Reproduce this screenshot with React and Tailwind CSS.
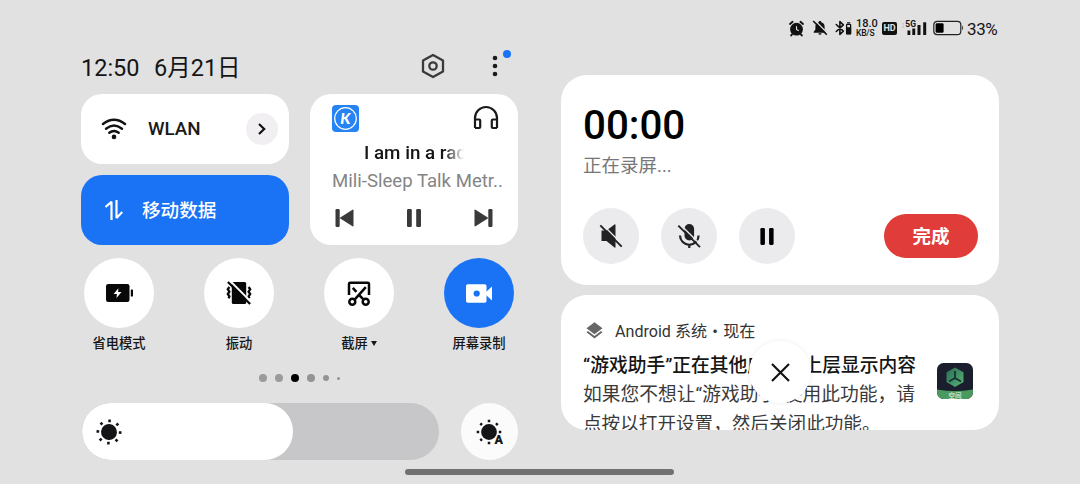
import React from 'react';

// ── Status bar icons ───────────────────────────────────
const IconAlarm = () => (
  <svg className="h-[17px] w-[17px]" viewBox="0 0 17 17" fill="none" stroke="#111" strokeLinecap="round">
    <circle cx="8.5" cy="9.2" r="6.4" fill="#111" stroke="none" />
    <path d="M2 4l2.6-2.2M15 4l-2.6-2.2M4 14.4l-.8 1M13 14.4l.8 1" strokeWidth="1.9" />
    <path d="M8.5 6.6v2.900l1.900 1" stroke="#e1e1e2" strokeWidth="1.1" />
  </svg>
);

const IconBellOff = () => (
  <svg className="h-4 w-4" viewBox="0 0 16 16">
    <path d="M8 1c.9 0 1.3.5 1.3 1.2 2.200.6 3.300 2.300 3.300 4.300v3l1.700 2.300v.9H1.700v-.9l1.700-2.300v-3c0-2 1.100-3.700 3.300-4.300C6.700 1.500 7.100 1 8 1zM6.400 13.200h3.200a1.600 1.600 0 01-3.200 0z" fill="#111" />
    <path d="M2.800.400l13.200 13.400" stroke="#e1e1e2" strokeWidth="1.300" />
    <path d="M1.200 1l13.600 13.800" stroke="#111" strokeWidth="1.600" />
  </svg>
);

const IconBluetooth = () => (
  <svg className="h-4 w-[17px]" viewBox="0 0 17 16" fill="none" stroke="#111">
    <path d="M1.300 4.500l7 6.600-3.400 3.400V1.500l3.400 3.400-7 6.600" strokeWidth="1.600" strokeLinejoin="round" strokeLinecap="round" />
    <path d="M12.700 3.500V2.800h1.800v.700" strokeWidth="1.300" />
    <rect x="11.600" y="4.300" width="4" height="9.600" rx=".6" strokeWidth="1.300" />
    <rect x="11.600" y="7.800" width="4" height="6" fill="#111" />
  </svg>
);

const IconSignal = () => (
  <svg className="h-4 w-[25px]" viewBox="0 0 25 16" fill="#111">
    <rect x="-1" y="3" width="3" height="1.500" fill="#c8c8c8" />
    <rect x="-1" y="6" width="3" height="1.500" fill="#c8c8c8" />
    <text x="3.300" y="7.300" fontSize="8.500" fontWeight="700" fontFamily="Roboto">5G</text>
    <rect x="5.500" y="10.500" width="2.800" height="4.500" />
    <rect x="10.300" y="8.500" width="2.900" height="6.500" />
    <rect x="15.500" y="5" width="3" height="10" />
    <rect x="21.200" y="2.300" width="3" height="12.700" />
  </svg>
);

const IconBattery = () => (
  <svg className="h-4 w-[31px]" viewBox="0 0 31 16" fill="none">
    <rect x=".8" y="1.300" width="27" height="13.400" rx="3.400" stroke="#222" strokeWidth="1.200" />
    <rect x="2.600" y="3.200" width="8" height="9.600" rx="1.300" fill="#000" />
    <path d="M29.200 5.500c1.200.8 1.200 4 0 4.800z" fill="#222" />
  </svg>
);

// ── Header icons ───────────────────────────────────────
const IconSettings = () => (
  <svg className="h-[26px] w-[26px]" viewBox="0 0 26 26" fill="none" stroke="#3a3a3c" strokeWidth="2.300" strokeLinejoin="round">
    <path d="M13 2l10 5.600v10.800L13 24 3 18.400V7.600z" />
    <circle cx="13" cy="13" r="3.700" />
  </svg>
);

const IconMore = () => (
  <svg className="h-[22px] w-[6px]" viewBox="0 0 6 22" fill="#1c1c1c">
    <circle cx="3" cy="3" r="2.300" />
    <circle cx="3" cy="11" r="2.300" />
    <circle cx="3" cy="19" r="2.300" />
  </svg>
);

// ── Card icons ─────────────────────────────────────────
const IconWifi = () => (
  <svg className="h-[22px] w-[26px]" viewBox="0 0 26 22" fill="none" stroke="#111" strokeWidth="2.400" strokeLinecap="round">
    <path d="M2 6Q13-2.400 24 6" />
    <path d="M5 10.700q8-6.400 16 0" />
    <path d="M8.300 14.700q4.700-3.600 9.400 0" />
    <circle cx="13" cy="18.900" r="2.300" fill="#111" stroke="none" />
  </svg>
);

const IconChevron = () => (
  <svg className="h-3 w-2" viewBox="0 0 8 12" fill="none" stroke="#111" strokeWidth="2.200">
    <path d="M1 1l5.200 5L1 11" />
  </svg>
);

const IconMobileData = () => (
  <svg className="h-5 w-[18px]" viewBox="0 0 18 20" fill="none" stroke="#fff" strokeWidth="2.200" strokeLinejoin="bevel">
    <path d="M.5 7L6.500 1.800V20" />
    <path d="M11.500 0v18L17.300 12" />
  </svg>
);

const IconKugou = () => (
  <svg className="h-[27px] w-[27px]" viewBox="0 0 27 27">
    <rect width="27" height="27" rx="4" fill="#2583f4" />
    <circle cx="13.500" cy="13.500" r="10.800" fill="none" stroke="#fff" strokeWidth="1.200" />
    <text x="13.300" y="19" fontSize="15.500" fontWeight="900" fontStyle="italic" fontFamily="Lato, Roboto, sans-serif" fill="#fff" textAnchor="middle">K</text>
  </svg>
);

const IconHeadphones = () => (
  <svg className="h-[25px] w-[26px]" viewBox="0 0 26 25" fill="none" stroke="#1a1a1a" strokeWidth="2.200">
    <path d="M2 23V13a11 11 0 0122 0v10" />
    <path d="M2 14.500h4.200a1 1 0 011 1V22a1 1 0 01-1 1H2M24 14.500h-4.200a1 1 0 00-1 1V22a1 1 0 001 1H24" />
  </svg>
);

const IconSkip = ({ className }) => (
  <svg className={`h-[18px] w-[19px] ${className}`} viewBox="0 0 19 18" fill="#3a3a3a">
    <rect x=".5" y="0" width="4.200" height="18" rx="1.200" />
    <path d="M4.500 9L17.500.7q1-.5 1 .6v15.400q0 1.100-1 .6z" />
  </svg>
);

const IconPause = ({ className }) => (
  <svg className={className} viewBox="0 0 14 18" fill="currentColor">
    <rect x="0" y="0" width="4.800" height="18" rx="1.200" />
    <rect x="9.200" y="0" width="4.800" height="18" rx="1.200" />
  </svg>
);

// ── Tile icons ─────────────────────────────────────────
const IconPowerSave = () => (
  <svg className="h-[18px] w-[27px]" viewBox="0 0 27 18">
    <rect width="23.500" height="18" rx="2.200" fill="#080808" />
    <rect x="24.800" y="5.500" width="2.200" height="7" rx=".6" fill="#080808" />
    <path d="M12.400 4.200L7.600 10h3.300l-.4 4 5-6h-3.400z" fill="#fff" />
  </svg>
);

const IconVibrate = () => (
  <svg className="h-6 w-[26px]" viewBox="0 0 26 24" fill="none">
    <rect x="5.800" y="1" width="14.400" height="22" rx="1.500" fill="#080808" />
    <path d="M3.400 6L1.800 8.300l1.600 2.400L1.800 13l1.600 2.400-.8 2M22.600 6l1.600 2.300-1.600 2.400 1.600 2.300-1.600 2.400.8 2" stroke="#080808" strokeWidth="2.300" />
    <path d="M3.700-.5l22 22" stroke="#fff" strokeWidth="2" />
    <path d="M1.900 1l22.200 22" stroke="#080808" strokeWidth="2.300" />
  </svg>
);

const IconScreenshot = () => (
  <svg className="h-[25px] w-6" viewBox="0 0 24 25" fill="none" stroke="#080808" strokeWidth="2.500">
    <path d="M2 14V3a1.200 1.200 0 011.200-1.200h17.600A1.200 1.200 0 0122 3v11" />
    <path d="M5.800 6.800l3.600 4M18.800 6.200L7.600 18.600M11.600 13.500l5 5.100" />
    <circle cx="5.300" cy="20.700" r="3" />
    <circle cx="18.700" cy="20.700" r="3" />
  </svg>
);

const IconRecord = () => (
  <svg className="h-[19px] w-[27px]" viewBox="0 0 27 19">
    <rect y=".3" width="20.500" height="18.400" rx="1.800" fill="#fff" />
    <path d="M20 8L26 2.500v14L20 11z" fill="#fff" />
    <circle cx="10.700" cy="9.500" r="3.100" fill="#1a73f5" />
  </svg>
);

const IconSun = ({ className }) => (
  <svg className={className} viewBox="-13 -13 26 26" fill="#151517" stroke="#151517" strokeWidth="2.600">
    <circle r="8" stroke="none" />
    <path d="M0-12.500v2.700M0 9.800v2.700M-12.500 0h2.700M9.800 0h2.700M-8.900-8.900l1.900 1.900M7 7l1.900 1.900M8.900-8.900L7-7M-7 7l-1.900 1.900" />
  </svg>
);

const IconSunAuto = () => (
  <svg className="h-[26px] w-[27px]" viewBox="-13 -13 27 26" fill="#151517">
    <circle r="7.900" />
    <path d="M0-12.300v2.500M0 9.800v2.500M-12.300 0h2.500M9.800 0h2.500M-8.700-8.700l1.700 1.700M8.700-8.700L7-7M-7 7l-1.700 1.700" stroke="#151517" strokeWidth="2.500" />
    <text x="9.700" y="12.400" fontSize="12.500" fontWeight="900" fontFamily="Roboto" textAnchor="middle" stroke="#fbfbfc" strokeWidth="1.500" paintOrder="stroke">A</text>
  </svg>
);

// ── Recorder icons ─────────────────────────────────────
const IconMute = () => (
  <svg className="h-6 w-6" viewBox="0 0 24 24">
    <path d="M2.500 6.500h5L15.500.500q1-.5 1 .5v22q0 1-1 .5l-8-6.500h-5z" fill="#222" />
    <path d="M3 0l21 21" stroke="#ebebed" strokeWidth="1.300" />
    <path d="M1.300 1.300l21.400 21.400" stroke="#222" strokeWidth="1.900" />
  </svg>
);

const IconMicOff = () => (
  <svg className="h-[26px] w-6" viewBox="0 0 24 26" fill="none">
    <rect x="7.500" y="1" width="9.600" height="16.500" rx="4.800" fill="#222" />
    <path d="M3 12.500a9.300 9.300 0 0018.600 0M12.300 21.500V25" stroke="#222" strokeWidth="2.200" />
    <path d="M3 1.200l21 20.800" stroke="#ebebed" strokeWidth="1.300" />
    <path d="M1.300 2.600l21.700 21.600" stroke="#222" strokeWidth="1.900" />
  </svg>
);

const IconLayers = () => (
  <svg className="h-[17px] w-[17px]" viewBox="0 0 17 17" fill="#666">
    <path d="M8.500.3l8 6-8 6-8-6z" />
    <path d="M.5 10.200l8 6.200 8-6.200-1.500-1.100-6.500 5-6.500-5z" />
  </svg>
);

const IconGame = () => (
  <svg className="h-9 w-9" viewBox="0 0 36 36">
    <defs>
      <clipPath id="gameClip"><rect width="36" height="36" rx="6.500" /></clipPath>
      <linearGradient id="gameHex" x1="0" y1="0" x2="1" y2="1">
        <stop offset="0" stopColor="#2c6b5a" />
        <stop offset="1" stopColor="#58b573" />
      </linearGradient>
    </defs>
    <g clipPath="url(#gameClip)">
      <rect width="36" height="36" fill="#1b1e2c" />
      <path d="M0 26.500q18 3 36 0V36H0z" fill="#4a9a5f" />
      <path d="M18 4.500l8.500 4.800v9.800L18 24l-8.500-4.900V9.300z" fill="url(#gameHex)" />
      <path d="M18 8v7l-6 3.500M18 15l6 3.500" stroke="#16302e" strokeWidth="1.800" fill="none" />
      <text x="18" y="34.500" fontSize="6.500" fontWeight="700" fontFamily="Noto Sans CJK SC" fill="#c4dfc9" textAnchor="middle">空间</text>
    </g>
  </svg>
);

const IconClose = () => (
  <svg className="h-[19px] w-[19px]" viewBox="0 0 19 19" fill="none" stroke="#111" strokeWidth="2.100">
    <path d="M1 1l17 17M18 1L1 18" />
  </svg>
);

// ── Data ───────────────────────────────────────────────
const TILES = [
  { id: 'power', label: '省电模式', icon: <IconPowerSave /> },
  { id: 'vibrate', label: '振动', icon: <IconVibrate /> },
  { id: 'screenshot', label: '截屏', icon: <IconScreenshot />, menu: true },
  { id: 'record', label: '屏幕录制', icon: <IconRecord />, active: true },
];

const PAGE_DOTS = ['size-2 bg-[#9b9b9d]', 'size-2 bg-[#9b9b9d]', 'size-2 bg-black', 'size-2 bg-[#949496]', 'size-1.5 bg-[#949496]', 'size-[3px] bg-[#949496]'];

// ── Quick settings ─────────────────────────────────────
const Header = () => (
  <div className="flex h-[38px] items-center text-[23.5px] leading-[38px] text-[#151515]">
    <span className="w-[73px] pt-0.5">12:50</span>
    <span className="pt-0.5">6月21日</span>
    <div className="ml-auto flex items-center gap-[46px] pr-5">
      <span className="-mt-0.5"><IconSettings /></span>
      <div className="relative -mt-0.5">
        <IconMore />
        <span className="absolute -top-[5px] left-[11px] size-2 rounded-full bg-[#1a73f5]" />
      </div>
    </div>
  </div>
);

const MusicCard = () => (
  <div className="row-span-2 rounded-[21px] bg-white px-[22px] pt-[11px]">
    <div className="flex justify-between">
      <IconKugou />
      <span className="-mr-[3px]"><IconHeadphones /></span>
    </div>
    <div className="ml-8 mt-[7px] w-[100px] overflow-hidden whitespace-nowrap bg-linear-to-r from-[#151515] from-80% to-[#15151500] bg-clip-text text-[18.800px] font-medium leading-7 text-transparent">
      I am in a radio
    </div>
    <div className="whitespace-nowrap text-[18.600px] leading-7 text-[#858585]">Mili-Sleep Talk Metr..</div>
    <div className="mt-[14px] flex items-center justify-between px-[3px]">
      <IconSkip className="" />
      <IconPause className="h-[18px] w-[14px] text-[#3a3a3a]" />
      <IconSkip className="rotate-180" />
    </div>
  </div>
);

const Tile = ({ tile }) => (
  <div className="flex w-[70px] flex-col items-center">
    <div className={`flex size-[70px] items-center justify-center rounded-full ${tile.active ? 'bg-[#1a73f5]' : 'bg-white'}`}>
      {tile.icon}
    </div>
    <div className="mt-1.5 flex h-5 items-center gap-[3px] whitespace-nowrap text-[13.300px] font-medium leading-5 text-[#161616]">
      {tile.label}
      {tile.menu && (
        <svg className="-mt-0.5 h-[5px] w-[6px]" viewBox="0 0 6 5"><path d="M0 0h6L3 5z" fill="#161616" /></svg>
      )}
    </div>
  </div>
);

const QuickSettings = () => (
  <section className="ml-[81px] w-[437px] pt-[48px]">
    <Header />
    <div className="mt-2 grid grid-cols-[208px_208px] grid-rows-[70px_70px] gap-x-[21px] gap-y-[11px]">
      <div className="flex items-center rounded-[21px] bg-white pl-5 pr-[11px]">
        <IconWifi />
        <span className="ml-[21px] pt-px text-[18.800px] font-medium text-[#1a1a1a]">WLAN</span>
        <span className="ml-auto flex size-8 items-center justify-center rounded-full bg-[#f1eff2]"><IconChevron /></span>
      </div>
      <MusicCard />
      <div className="flex items-center rounded-[21px] bg-[#1a73f5] pl-6 text-white">
        <IconMobileData />
        <span className="ml-[19px] pt-[3px] text-[18.600px] font-medium">移动数据</span>
      </div>
    </div>
    <div className="mt-[13px] flex justify-between pl-[3px] pr-1">
      {TILES.map(tile => <Tile key={tile.id} tile={tile} />)}
    </div>
    <div className="ml-[178px] mt-5 flex h-2 items-center gap-2">
      {PAGE_DOTS.map((dot, i) => <span key={i} className={`rounded-full ${dot}`} />)}
    </div>
    <div className="mt-[21px] flex h-[57px] items-center justify-between">
      <div className="ml-px h-full w-[357px] overflow-hidden rounded-full bg-[#c7c6c8]">
        <div className="flex h-full w-[211px] items-center rounded-full bg-white pl-[14px]">
          <IconSun className="size-[26px] rotate-3" />
        </div>
      </div>
      <div className="flex size-[57px] items-center justify-center rounded-full bg-[#fbfbfc]"><IconSunAuto /></div>
    </div>
  </section>
);

// ── Notifications ──────────────────────────────────────
const StatusBar = () => (
  <div className="flex h-5 items-center justify-end text-[#151515]">
    <IconAlarm />
    <span className="ml-[7px]"><IconBellOff /></span>
    <span className="ml-[7px]"><IconBluetooth /></span>
    <div className="ml-[4px] w-[22px] whitespace-nowrap font-medium">
      <div className="h-[10px] text-[11px] leading-[10px]">18.0</div>
      <div className="h-[9px] text-[8.500px] leading-[9px] tracking-[-0.2px]">KB/S</div>
    </div>
    <span className="ml-[4px] flex h-[13px] w-[15px] items-center justify-center rounded-[2px] bg-[#111] text-[9px] font-bold leading-none text-[#e1e1e2]">HD</span>
    <span className="ml-[5px]"><IconSignal /></span>
    <span className="ml-[6px]"><IconBattery /></span>
    <span className="ml-[3px] w-[32px] pt-0.5 text-[17px] leading-5 tracking-[-0.4px]">33%</span>
  </div>
);

const RecorderCard = () => (
  <div className="h-[210px] rounded-[26px] bg-white px-[22px] pt-[30px]">
    <div className="text-[40.300px] font-medium leading-[42px] text-black">00:00</div>
    <div className="mt-[5px] text-[18.500px] leading-7 text-[#777]">正在录屏...</div>
    <div className="mt-[28px] flex items-center gap-[22px]">
      <button className="flex size-14 items-center justify-center rounded-full bg-[#ebebed]"><IconMute /></button>
      <button className="flex size-14 items-center justify-center rounded-full bg-[#ebebed]"><IconMicOff /></button>
      <button className="flex size-14 items-center justify-center rounded-full bg-[#ebebed]">
        <IconPause className="h-[17px] w-[14px] text-black" />
      </button>
      <button className="ml-auto -mr-px h-[44px] w-[94px] rounded-full bg-[#e03c39] pt-1 text-[18.500px] font-bold text-white">完成</button>
    </div>
  </div>
);

const SystemNotification = () => (
  <div className="mt-2.5 h-[135px] overflow-hidden rounded-[26px] bg-white px-[22px] pt-[25px]">
    <div className="flex h-[22px] items-center pl-[3px] text-[16.100px] leading-[22px] text-[#333]">
      <span className="-mt-px"><IconLayers /></span>
      <span className="ml-[12px] whitespace-nowrap pt-px">Android 系统・现在</span>
    </div>
    <div className="mt-2.5 flex">
      <div className="w-[340px] whitespace-nowrap text-[18.750px] leading-[29px] text-[#3a3a3a]">
        <div className="font-medium text-[#151515]">“游戏助手”正在其他应用的上层显示内容</div>
        <div>如果您不想让“游戏助手”使用此功能，请</div>
        <div className="text-[18.600px]">点按以打开设置，然后关闭此功能。</div>
      </div>
      <div className="ml-[14px] mt-[11px]"><IconGame /></div>
    </div>
  </div>
);

export default function App() {
  return (
    <main lang="zh-CN" className="relative flex h-[484px] w-[1080px] overflow-hidden bg-[#e1e1e2] font-['Roboto','Noto_Sans_CJK_SC',sans-serif]">
      <QuickSettings />
      <section className="ml-[43px] w-[438px] pt-[18px]">
        <StatusBar />
        <div className="relative mt-[37px]">
          <RecorderCard />
          <SystemNotification />
          <button className="absolute left-[188px] top-[266px] flex size-[62px] items-center justify-center rounded-full bg-white shadow-[0_0_5px_rgba(0,0,0,0.08)]">
            <IconClose />
          </button>
        </div>
      </section>
      {/* Gesture bar */}
      <div className="absolute bottom-[9px] left-[405px] h-[6px] w-[269px] rounded-full bg-[#717171]" />
    </main>
  );
}
